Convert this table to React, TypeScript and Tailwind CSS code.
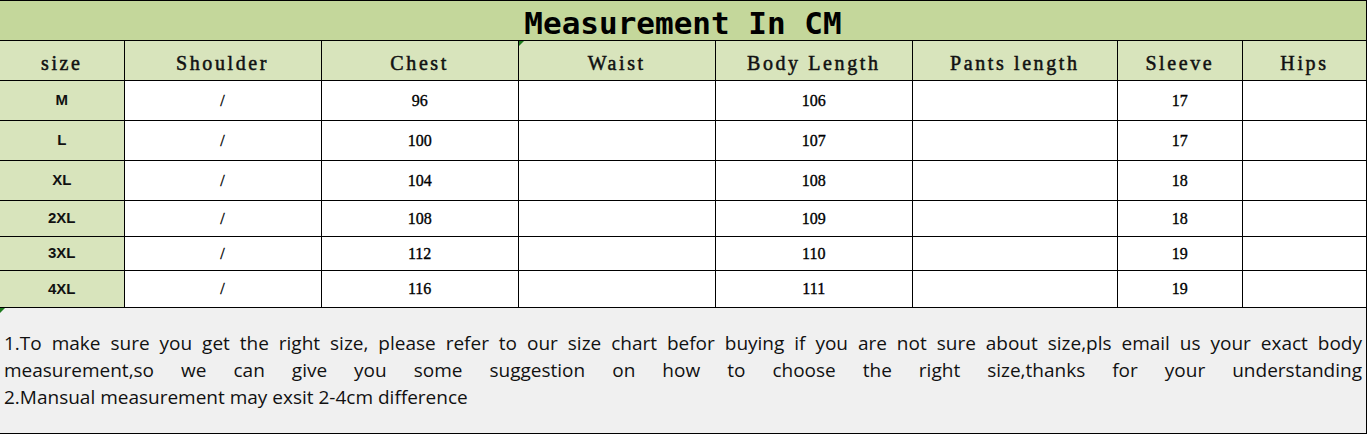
import React from 'react';

const COLS = [124, 197, 197, 197, 197, 205, 125, 124];
const HEADERS = ['size', 'Shoulder', 'Chest', 'Waist', 'Body Length', 'Pants length', 'Sleeve', 'Hips'];

const ROWS: { size: string; chest: string; body: string; sleeve: string; h: string }[] = [
  { size: 'M', chest: '96', body: '106', sleeve: '17', h: 'h-[40px]' },
  { size: 'L', chest: '100', body: '107', sleeve: '17', h: 'h-[40px]' },
  { size: 'XL', chest: '104', body: '108', sleeve: '18', h: 'h-[40px]' },
  { size: '2XL', chest: '108', body: '109', sleeve: '18', h: 'h-[36px]' },
  { size: '3XL', chest: '112', body: '110', sleeve: '19', h: 'h-[34px]' },
  { size: '4XL', chest: '116', body: '111', sleeve: '19', h: 'h-[37px]' },
];

const numCell =
  "border border-black bg-white text-center text-[16px] text-black font-['Liberation_Serif',serif] [-webkit-text-stroke:0.35px_black]";

const App: React.FC = () => {
  return (
    <div className="w-[1368px] h-[434px] bg-white overflow-hidden">
      <div className="relative w-[1367px]">
        <table className="table-fixed border-collapse w-[1367px]">
          <colgroup>
            {COLS.map((w, i) => (
              <col key={i} style={{ width: w }} />
            ))}
          </colgroup>
          <tbody>
            <tr className="h-[40px]">
              <td
                colSpan={8}
                className="border-t border-r border-b border-black bg-[#c4d79b] text-center align-middle p-0 pt-[7px]"
              >
                <span className="font-['DejaVu_Sans_Mono',monospace] font-bold text-[31px] leading-none text-black">
                  Measurement In CM
                </span>
              </td>
            </tr>
            <tr className="h-[40px]">
              {HEADERS.map((h, i) => (
                <td
                  key={h}
                  className={`${i === 0 ? 'border-l-0' : 'border-l'} border-r border-b border-black bg-[#d8e4bc] text-center p-0 pt-[5px] font-['Liberation_Serif',serif] text-[20px] tracking-[2.6px] text-[#111] [-webkit-text-stroke:0.5px_#111]`}
                >
                  {h}
                </td>
              ))}
            </tr>
            {ROWS.map((r) => (
              <tr key={r.size} className={r.h}>
                <td className="border-r border-b border-black bg-[#d8e4bc] text-center p-0 font-['Liberation_Sans',sans-serif] font-bold text-[15px] text-[#111]">
                  {r.size}
                </td>
                <td className={numCell}>/</td>
                <td className={numCell}>{r.chest}</td>
                <td className={numCell}></td>
                <td className={numCell}>{r.body}</td>
                <td className={numCell}></td>
                <td className={numCell}>{r.sleeve}</td>
                <td className={numCell}></td>
              </tr>
            ))}
          </tbody>
        </table>
        {/* excel corner markers */}
        <div className="absolute left-[519px] top-[41px] w-0 h-0 border-t-[5px] border-r-[5px] border-t-[#1e7b1e] border-r-transparent" />
        <div className="absolute left-0 top-[308px] w-0 h-0 border-t-[5px] border-r-[5px] border-t-[#1e7b1e] border-r-transparent" />
        <div className="h-[126px] bg-[#f0f0f0] border-r border-b border-black px-[4px] pt-[22px] font-['Open_Sans',sans-serif] text-[19px] leading-[27px] text-[#111]">
          <div className="text-justify [text-align-last:justify]">
            1.To make sure you get the right size, please refer to our size chart befor buying if you are not sure about size,pls email us your exact body
          </div>
          <div className="text-justify [text-align-last:justify]">
            measurement,so we can give you some suggestion on how to choose the right size,thanks for your understanding
          </div>
          <div>2.Mansual measurement may exsit 2-4cm difference</div>
        </div>
      </div>
    </div>
  );
};

export default App;
